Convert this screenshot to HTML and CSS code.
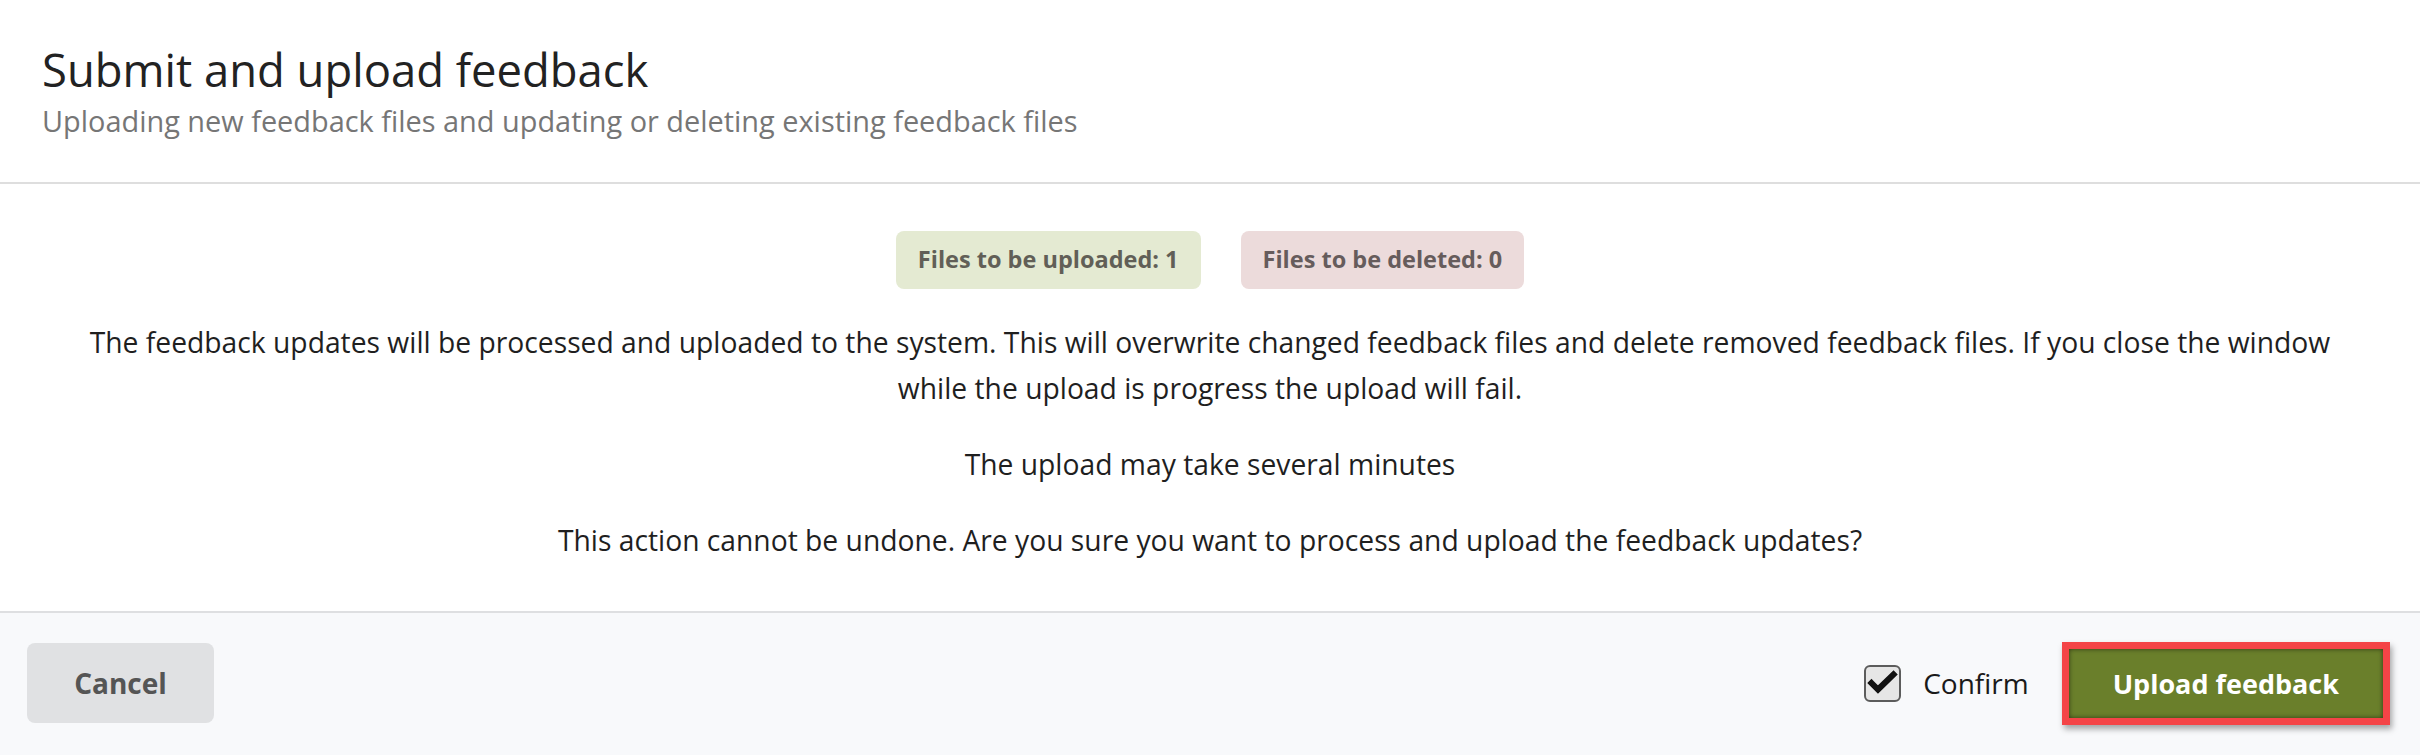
FILE: index.html
```html
<!DOCTYPE html>
<html lang="en">
<head>
<meta charset="utf-8">
<title>Submit and upload feedback</title>
<link rel="stylesheet" href="styles.css">
</head>
<body>
<div class="modal">
  <header class="modal-header">
    <h1 class="title">Submit and upload feedback</h1>
    <p class="subtitle">Uploading new feedback files and updating or deleting existing feedback files</p>
  </header>
  <main class="modal-body">
    <div class="badges">
      <span class="badge badge-upload">Files to be uploaded: 1</span>
      <span class="badge badge-delete">Files to be deleted: 0</span>
    </div>
    <p class="text">The feedback updates will be processed and uploaded to the system. This will overwrite changed feedback files and delete removed feedback files. If you close the window while the upload is progress the upload will fail.</p>
    <p class="text">The upload may take several minutes</p>
    <p class="text">This action cannot be undone. Are you sure you want to process and upload the feedback updates?</p>
  </main>
  <footer class="modal-footer">
    <button class="btn btn-cancel" type="button">Cancel</button>
    <div class="actions">
      <label class="confirm">
        <span class="checkbox">
          <svg viewBox="0 0 37 37" width="37" height="37" aria-hidden="true">
            <polyline points="7.5,18 14,24.5 29.5,9.5" fill="none" stroke="#111" stroke-width="6" stroke-linecap="square" stroke-linejoin="miter"/>
          </svg>
        </span>
        <span class="confirm-text">Confirm</span>
      </label>
      <button class="btn btn-upload" type="button">Upload feedback</button>
    </div>
  </footer>
</div>
</body>
</html>
```
FILE: styles.css
```css
* {
  box-sizing: border-box;
}

html, body {
  margin: 0;
  padding: 0;
  background: #ffffff;
}

body {
  font-family: "Open Sans", "Noto Sans", "DejaVu Sans", sans-serif;
  color: #1f1f1f;
  width: 2420px;
  height: 755px;
  overflow: hidden;
}

.modal {
  display: flex;
  flex-direction: column;
  height: 755px;
}

.modal-header {
  padding: 42px 43px 40px 42px;
  border-bottom: 2px solid #dedede;
}

.title {
  margin: 0;
  font-size: 45.4px;
  line-height: 54px;
  font-weight: 400;
  color: #222222;
}

.subtitle {
  margin: 3px 0 0 0;
  font-size: 28.9px;
  line-height: 43px;
  color: #767676;
}

.modal-body {
  flex: 1;
  padding: 47px 70px 0 70px;
  text-align: center;
}

.badges {
  display: flex;
  justify-content: center;
  gap: 40px;
  margin-bottom: 30px;
}

.badge {
  display: inline-block;
  padding: 12px 22px 14px 22px;
  border-radius: 8px;
  font-size: 23.5px;
  line-height: 32px;
  font-weight: 700;
  color: #615f57;
}

.badge-upload {
  background: #e4ead2;
}

.badge-delete {
  background: #ecdbdb;
  color: #665c5c;
}

.text {
  margin: 0 0 30px 0;
  font-size: 28.25px;
  line-height: 46px;
  color: #1f1f1f;
}

.modal-footer {
  height: 144px;
  border-top: 2px solid #dedfe1;
  background: #f8f9fb;
  display: flex;
  align-items: center;
  justify-content: space-between;
  padding: 0 30px 2px 27px;
}

.btn {
  font-family: "Open Sans", "Noto Sans", "DejaVu Sans", sans-serif;
  font-weight: 700;
  border: none;
  cursor: pointer;
}

.btn-cancel {
  width: 187px;
  height: 80px;
  border-radius: 8px;
  background: #e0e1e3;
  color: #555555;
  font-size: 28px;
}

.actions {
  display: flex;
  align-items: center;
  gap: 33px;
}

.confirm {
  display: flex;
  align-items: center;
  gap: 22px;
}

.checkbox {
  width: 37px;
  height: 37px;
  border: 2px solid #5c5c5c;
  border-radius: 6px;
  background: #e6e6e6;
  display: flex;
  align-items: center;
  justify-content: center;
  overflow: hidden;
}

.checkbox svg {
  display: block;
  flex: none;
}

.confirm-text {
  font-size: 28px;
  line-height: 38px;
  color: #1a1a1a;
}

.btn-upload {
  height: 83px;
  padding: 0 44px;
  border: 7px solid #f44447;
  background: #6a7f2b;
  color: #ffffff;
  font-size: 27px;
  box-shadow: inset 0 0 5px rgba(0, 0, 0, 0.55), 2px 4px 6px rgba(0, 0, 0, 0.35);
}
```
